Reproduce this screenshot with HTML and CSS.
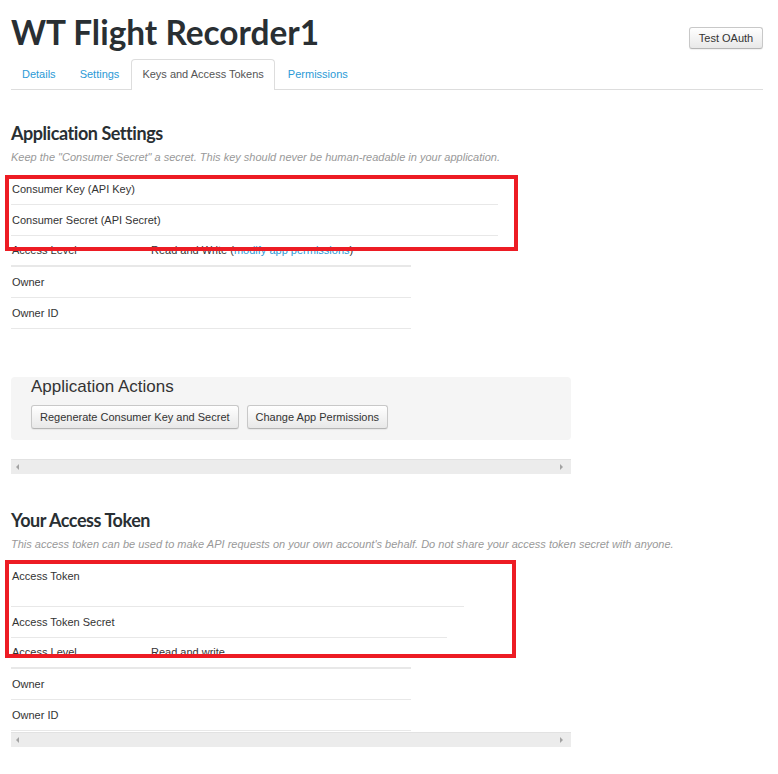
FILE: index.html
```html
<!DOCTYPE html>
<html lang="en">
<head>
<meta charset="utf-8">
<title>WT Flight Recorder1</title>
<link rel="stylesheet" href="styles.css">
</head>
<body>
<div class="page">
  <header class="head">
    <h1 class="title">WT Flight Recorder1</h1>
    <button class="btn btn-test">Test OAuth</button>
  </header>
  <nav class="tabs">
    <a class="tab">Details</a>
    <a class="tab">Settings</a>
    <a class="tab active">Keys and Access Tokens</a>
    <a class="tab">Permissions</a>
  </nav>

  <section class="sec sec-app">
    <h2 class="sec-title">Application Settings</h2>
    <p class="note">Keep the "Consumer Secret" a secret. This key should never be human-readable in your application.</p>
    <div class="kv">
      <div class="row w-487"><span class="lbl">Consumer Key (API Key)</span></div>
      <div class="row w-487"><span class="lbl">Consumer Secret (API Secret)</span></div>
      <div class="row thick"><span class="lbl">Access Level</span><span class="val">Read and Write (<a class="link">modify app permissions</a>)</span></div>
      <div class="row"><span class="lbl">Owner</span></div>
      <div class="row"><span class="lbl">Owner ID</span></div>
    </div>
    <div class="actions">
      <h3 class="actions-title">Application Actions</h3>
      <div class="actions-btns">
        <button class="btn">Regenerate Consumer Key and Secret</button>
        <button class="btn">Change App Permissions</button>
      </div>
    </div>
    <div class="hscroll hscroll-1"><span class="arr arr-l"></span><span class="arr arr-r"></span></div>
  </section>

  <section class="sec sec-token">
    <h2 class="sec-title">Your Access Token</h2>
    <p class="note">This access token can be used to make API requests on your own account's behalf. Do not share your access token secret with anyone.</p>
    <div class="kv">
      <div class="row tall w-453"><span class="lbl">Access Token</span></div>
      <div class="row w-436"><span class="lbl">Access Token Secret</span></div>
      <div class="row thick"><span class="lbl">Access Level</span><span class="val">Read and write</span></div>
      <div class="row"><span class="lbl">Owner</span></div>
      <div class="row"><span class="lbl">Owner ID</span></div>
    </div>
    <div class="hscroll hscroll-2"><span class="arr arr-l"></span><span class="arr arr-r"></span></div>
  </section>

  <div class="mark mark-1"></div>
  <div class="mark mark-2"></div>
</div>
</body>
</html>
```
FILE: styles.css
```css
html, body {
  margin: 0;
  padding: 0;
  background: #fff;
}
body {
  font-family: "Liberation Sans", Arial, sans-serif;
  font-size: 11px;
  color: #333;
}
.page {
  position: relative;
  width: 752px;
  padding: 0 15px 0 11px;
}
.head {
  display: flex;
  justify-content: space-between;
  align-items: flex-start;
  padding-top: 12px;
}
.title {
  margin: 0;
  font-family: Lato, "Open Sans", sans-serif;
  font-weight: 700;
  font-size: 33.4px;
  line-height: 40px;
  color: #292f33;
}
.btn {
  font-family: "Liberation Sans", Arial, sans-serif;
  font-size: 11px;
  color: #333;
  height: 24px;
  padding: 0 8px;
  background: linear-gradient(#ffffff, #e8e8e8);
  border: 1px solid #c8c8c8;
  border-bottom-color: #b5b5b5;
  border-radius: 3px;
  box-shadow: 0 1px 1px rgba(0,0,0,0.06);
  cursor: pointer;
}
.btn-test {
  margin-top: 15px;
  height: 22px;
  width: 74px;
  padding: 0;
}
.tabs {
  display: flex;
  margin-top: 7px;
  height: 30px;
  border-bottom: 1px solid #ddd;
}
.tab {
  display: block;
  padding: 0 10px;
  margin-right: 2px;
  color: #2b9ad6;
  border: 1px solid transparent;
  border-bottom: 0;
  border-radius: 4px 4px 0 0;
  height: 30px;
  box-sizing: border-box;
  line-height: 29px;
}
.tab:nth-child(2) { margin-right: 1px; }
.tab.active {
  color: #555;
  border-color: #ddd;
  background: #fff;
  height: 31px;
}
.sec-title {
  margin: 0;
  font-family: Lato, "Open Sans", sans-serif;
  font-weight: 700;
  font-size: 18px;
  line-height: 22px;
  letter-spacing: -0.45px;
  color: #292f33;
}
.sec-app .sec-title { margin-top: 32px; }
.sec-token .sec-title { margin-top: 35px; }
.note {
  margin: 6px 0 9px;
  font-style: italic;
  color: #999;
  line-height: 15px;
  white-space: nowrap;
}
.kv {
  display: flex;
  flex-direction: column;
}
.row {
  display: flex;
  align-items: center;
  width: 400px;
  height: 31px;
  box-sizing: border-box;
  border-bottom: 1px solid #e8e8e8;
}
.row.thick { border-bottom-width: 2px; }
.row.tall { height: 46px; align-items: flex-start; padding-top: 8px; }
.w-487 { width: 487px; }
.w-453 { width: 453px; }
.w-436 { width: 436px; }
.lbl {
  flex: 0 0 140px;
  padding-left: 1px;
  box-sizing: border-box;
  line-height: 15px;
  white-space: nowrap;
}
.val { line-height: 15px; white-space: nowrap; }
.link { color: #2b9ad6; }
.actions {
  margin-top: 48px;
  width: 560px;
  box-sizing: border-box;
  background: #f5f5f5;
  border-radius: 4px;
  padding: 0 20px 11px;
}
.actions-title {
  margin: 0;
  font-weight: normal;
  font-size: 17px;
  line-height: 20px;
  color: #333;
}
.actions-btns {
  display: flex;
  gap: 8px;
  margin-top: 8px;
}
.hscroll {
  position: relative;
  width: 560px;
  height: 15px;
  background: #ececec;
  border-top: 1px solid #e2e2e2;
  box-sizing: border-box;
}
.hscroll-1 { margin-top: 19px; }
.hscroll-2 { margin-top: 1px; }
.arr {
  position: absolute;
  top: 4px;
  width: 0;
  height: 0;
  border-top: 3px solid transparent;
  border-bottom: 3px solid transparent;
}
.arr-l { left: 5px; border-right: 3px solid #a3a3a3; }
.arr-r { right: 8px; border-left: 3px solid #a3a3a3; }
.mark {
  position: absolute;
  border: 4px solid #ed1c24;
  box-sizing: border-box;
}
.mark-1 { left: 5px; top: 175px; width: 513px; height: 76px; }
.mark-2 { left: 5px; top: 560px; width: 511px; height: 98px; }
```
